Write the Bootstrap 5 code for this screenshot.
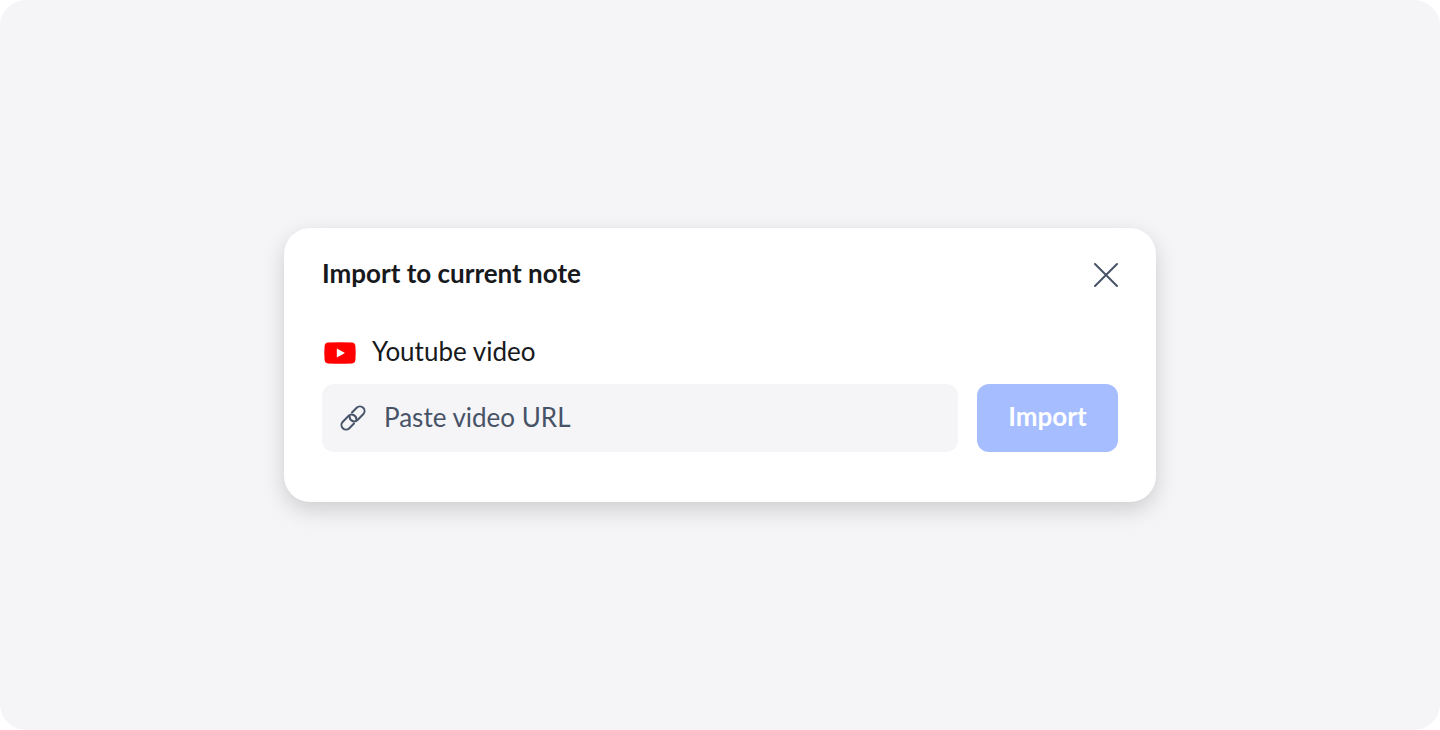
<!DOCTYPE html>
<html lang="en">
<head>
<meta charset="utf-8">
<meta name="viewport" content="width=device-width, initial-scale=1">
<title>Import to current note</title>
<link href="https://cdn.jsdelivr.net/npm/bootstrap@5.3.0/dist/css/bootstrap.min.css" rel="stylesheet">
<style>
  body { font-family: Lato, "Open Sans", sans-serif; font-size: 26px; line-height: 36px; color: #17191c; background: #fff; }
  .backdrop-area { background: #f5f5f8; border-radius: 26px; }
  .import-dialog { width: 100%; max-width: 872px; padding: 28px 38px 50px; border-radius: 26px; background: #fff;
    box-shadow: 0 8px 22px rgba(0, 0, 0, .16), 0 0 2px rgba(0, 0, 0, .03); }
  .dialog-title { font-size: 26px; line-height: 34px; font-weight: 700; color: #17191c; }
  .close-button { width: 26px; height: 38px; color: #475366; }
  .dialog-head { margin-bottom: 40px; }
  .source-label { height: 38px; gap: 16px; padding-left: 2px; margin-bottom: 12px; }
  .source-label span { line-height: 34px; padding-bottom: 4px; }
  .url-row { gap: 19px; }
  .url-field { height: 68px; border-radius: 12px; background: #f5f5f8; color: #475366; padding-left: 18px; gap: 18px; }
  .url-field .form-control { font-size: 26px; line-height: 36px; color: #475366; padding: 0 0 2px; }
  .url-field .form-control::placeholder { color: #475366; opacity: 1; }
  .import-button { height: 68px; width: 141px; border-radius: 12px; padding: 0 0 4px; font-size: 26px; font-weight: 700; color: #fff; background: #a6bdff; }
  .import-button:hover { color: #fff; background: #94afff; }
</style>
</head>
<body>
<main class="backdrop-area min-vh-100 d-flex align-items-center justify-content-center">
  <form class="import-dialog" role="dialog" aria-labelledby="dialog-title">
    <header class="dialog-head d-flex align-items-start justify-content-between">
      <h1 class="dialog-title mb-0" id="dialog-title">Import to current note</h1>
      <button type="button" class="close-button btn border-0 p-0 d-flex align-items-center" aria-label="Close">
        <svg width="26" height="26" viewBox="0 0 26 26" fill="none" stroke="currentColor" stroke-width="2" stroke-linecap="round" aria-hidden="true"><path d="M3 2 25 24M25 2 3 24"/></svg>
      </button>
    </header>
    <label class="source-label d-flex align-items-center" for="video-url">
      <svg width="32" height="24" viewBox="0 0 32 24" aria-hidden="true">
        <path fill="#f00" d="M4 1.600Q16 .8 28 1.600Q31 1.900 31.400 5Q32 12 31.400 19Q31 22.100 28 22.400Q16 23.200 4 22.400Q1 22.100.6 19Q0 12 .6 5Q1 1.900 4 1.600Z"/>
        <path fill="#fff" d="M12.800 7.600v8.800l8.200-4.400z"/>
      </svg>
      <span>Youtube video</span>
    </label>
    <div class="url-row d-flex">
      <div class="url-field d-flex align-items-center flex-grow-1">
        <svg class="flex-shrink-0" width="26" height="26" viewBox="0 0 26 26" fill="none" stroke="currentColor" stroke-width="2" stroke-linecap="round" aria-hidden="true">
          <g transform="rotate(-45 13 13)">
            <path d="M9.800 17.600H3.200A4.600 4.600 0 0 1 3.200 8.400H11.200A4.600 4.600 0 0 1 14.400 16.300"/>
            <path d="M16.200 8.400H22.800A4.600 4.600 0 0 1 22.800 17.600H14.800A4.600 4.600 0 0 1 11.600 9.700"/>
          </g>
        </svg>
        <input class="form-control border-0 bg-transparent shadow-none" type="url" id="video-url" placeholder="Paste video URL">
      </div>
      <button type="submit" class="import-button btn border-0 flex-shrink-0">Import</button>
    </div>
  </form>
</main>
<script src="https://cdn.jsdelivr.net/npm/bootstrap@5.3.0/dist/js/bootstrap.bundle.min.js"></script>
</body>
</html>
